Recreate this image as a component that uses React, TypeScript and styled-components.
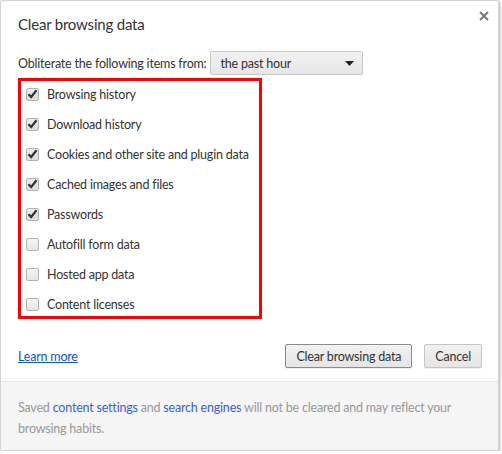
import { createGlobalStyle, styled } from 'styled-components';

const GlobalStyle = createGlobalStyle`
  html, body {
    margin: 0;
    padding: 0;
    background: #ffffff;
  }
  body {
    font-family: Lato, "Open Sans", sans-serif;
    font-size: 12.5px;
    letter-spacing: -0.2px;
    color: #333;
  }
`;

const Dialog = styled.div`
  box-sizing: border-box;
  width: 499px;
  height: 451px;
  background: #fff;
  border: 1px solid #d4d4d4;
  border-radius: 2px;
  box-shadow: 1px 1px 3px rgba(0, 0, 0, 0.3);
  display: flex;
  flex-direction: column;
  position: relative;
  overflow: hidden;
`;

const Body = styled.div`
  flex: 1;
  padding: 11px 16px 0 17px;
  display: flex;
  flex-direction: column;
`;

const Title = styled.h1`
  margin: 0;
  font-size: 15px;
  font-weight: normal;
  color: #333;
  line-height: 24px;
`;

const CloseButton = styled.button`
  position: absolute;
  top: 9px;
  right: 8px;
  width: 12px;
  height: 12px;
  padding: 0;
  border: 0;
  background: none;
  display: flex;
  align-items: center;
  justify-content: center;
`;

const TimeRow = styled.div`
  display: flex;
  align-items: center;
  gap: 3px;
  margin-top: 15px;
`;

const Select = styled.div`
  box-sizing: border-box;
  width: 153px;
  height: 24px;
  border: 1px solid #c8c8c8;
  border-radius: 2px;
  background: linear-gradient(#f2f2f2, #e6e6e6);
  display: flex;
  align-items: center;
  justify-content: space-between;
  padding: 0 8px 0 10px;
  color: #333;
`;

const ItemsBox = styled.div`
  box-sizing: border-box;
  width: 244px;
  height: 241px;
  margin-top: 3px;
  border: 3px solid #ff0000;
  padding: 0 0 0 5px;
  display: flex;
  flex-direction: column;
`;

const Item = styled.label`
  display: flex;
  align-items: center;
  gap: 8px;
  height: 30px;
  flex-shrink: 0;
  color: #333;
  &:first-child {
    margin-top: -2px;
  }
`;

const CheckBox = styled.span<{ $checked: boolean }>`
  box-sizing: border-box;
  width: 13px;
  height: 13px;
  border: 1px solid #b3b3b3;
  border-radius: 2px;
  background: ${(p) => (p.$checked ? 'linear-gradient(#ececec, #dcdcdc)' : 'linear-gradient(#f4f4f4, #e6e6e6)')};
  display: flex;
  align-items: center;
  justify-content: center;
`;

const Actions = styled.div`
  display: flex;
  align-items: center;
  margin-top: 25px;
`;

const LearnMore = styled.a`
  color: #1155cc;
  text-decoration: underline;
  margin-right: auto;
  cursor: pointer;
`;

const Button = styled.button<{ $primary?: boolean }>`
  box-sizing: border-box;
  height: 24px;
  padding: 0 10px;
  margin-left: 12px;
  font: inherit;
  letter-spacing: inherit;
  color: #333;
  border: 1px solid ${(p) => (p.$primary ? '#8a8a8a' : '#c4c4c4')};
  border-radius: 2px;
  background: linear-gradient(#f1f1f1, #e5e5e5);
  box-shadow: 0 1px 0 rgba(0, 0, 0, 0.06);
`;

const Footer = styled.p`
  margin: 0;
  height: 69px;
  background: #f5f5f5;
  border-top: 1px solid #e5e5e5;
  padding: 15px 17px 0;
  box-sizing: border-box;
  color: #999;
  line-height: 21px;
`;

const FooterLink = styled.a`
  color: #3b5fd5;
  text-decoration: none;
`;

const items: [string, boolean][] = [
  ['Browsing history', true],
  ['Download history', true],
  ['Cookies and other site and plugin data', true],
  ['Cached images and files', true],
  ['Passwords', true],
  ['Autofill form data', false],
  ['Hosted app data', false],
  ['Content licenses', false],
];

const Check = () => (
  <svg width="11" height="10" viewBox="0 0 11 10">
    <path d="M1.5 5.2 L4.2 8 L9.5 1.2" fill="none" stroke="#333" strokeWidth="2.2" />
  </svg>
);

export default function App() {
  return (
    <>
      <GlobalStyle />
      <Dialog>
        <CloseButton aria-label="Close">
          <svg width="10" height="10" viewBox="0 0 10 10">
            <path d="M1 1 L9 9 M9 1 L1 9" stroke="#777" strokeWidth="2" />
          </svg>
        </CloseButton>
        <Body>
          <Title>Clear browsing data</Title>
          <TimeRow>
            <span>Obliterate the following items from:</span>
            <Select>
              <span>the past hour</span>
              <svg width="9" height="5" viewBox="0 0 9 5">
                <path d="M0 0 H9 L4.5 5 Z" fill="#222" />
              </svg>
            </Select>
          </TimeRow>
          <ItemsBox>
            {items.map(([label, checked]) => (
              <Item key={label}>
                <CheckBox $checked={checked}>{checked && <Check />}</CheckBox>
                {label}
              </Item>
            ))}
          </ItemsBox>
          <Actions>
            <LearnMore>Learn more</LearnMore>
            <Button $primary>Clear browsing data</Button>
            <Button>Cancel</Button>
          </Actions>
        </Body>
        <Footer>
          <span>Saved </span>
          <FooterLink>content settings</FooterLink>
          <span> and </span>
          <FooterLink>search engines</FooterLink>
          <span> will not be cleared and may reflect your </span>
          <span>browsing habits.</span>
        </Footer>
      </Dialog>
    </>
  );
}
